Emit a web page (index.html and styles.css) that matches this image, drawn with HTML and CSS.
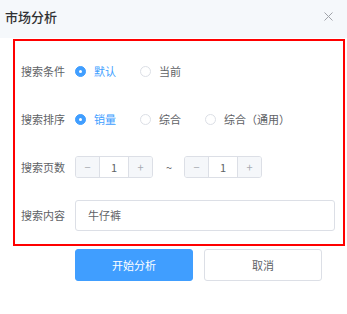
FILE: index.html
```html
<!DOCTYPE html>
<html>

<head>
  <link rel="stylesheet" href="styles.css">
</head>

<body>
  <div class="dialog">
    <div class="dialog-header">
      <span class="dialog-title">市场分析</span>
      <svg class="dialog-close" width="9" height="9" viewBox="0 0 9 9">
        <path d="M0.5 0.5 L8.5 8.5 M8.5 0.5 L0.5 8.5" stroke="#a0a3a9" stroke-width="1" fill="none"/>
      </svg>
    </div>

    <div class="form-box">
      <div class="form-row">
        <span class="form-label">搜索条件</span>
        <label class="radio checked"><span class="radio-dot"></span>默认</label>
        <label class="radio"><span class="radio-dot"></span>当前</label>
      </div>

      <div class="form-row">
        <span class="form-label">搜索排序</span>
        <label class="radio checked"><span class="radio-dot"></span>销量</label>
        <label class="radio"><span class="radio-dot"></span>综合</label>
        <label class="radio"><span class="radio-dot"></span>综合（通用）</label>
      </div>

      <div class="form-row">
        <span class="form-label">搜索页数</span>
        <div class="number-input">
          <span class="num-btn num-minus">&minus;</span>
          <span class="num-value">1</span>
          <span class="num-btn num-plus">+</span>
        </div>
        <span class="range-sep">~</span>
        <div class="number-input">
          <span class="num-btn num-minus">&minus;</span>
          <span class="num-value">1</span>
          <span class="num-btn num-plus">+</span>
        </div>
      </div>

      <div class="form-row">
        <span class="form-label">搜索内容</span>
        <div class="text-input">牛仔裤</div>
      </div>
    </div>

    <div class="dialog-footer">
      <button class="button button-primary">开始分析</button>
      <button class="button">取消</button>
    </div>
  </div>
</body>

</html>
```

FILE: styles.css
```css
body {
  margin: 0;
  background-color: #fff;
  font-family: "Noto Sans CJK SC", "Noto Sans", sans-serif;
  font-size: 11px;
  color: #606266;
}

.dialog {
  width: 347px;
  height: 314px;
}

.dialog-header {
  height: 38px;
  background-color: #f5f8fb;
  display: flex;
  justify-content: space-between;
  align-items: flex-start;
  padding: 0 14px 0 5px;
}

.dialog-title {
  font-size: 13px;
  font-weight: 500;
  line-height: 33px;
  color: #303133;
}

.dialog-close {
  margin-top: 12px;
}

/* 表单区域（红框） */
.form-box {
  margin: 1px 0 0 13px;
  width: 332px;
  box-sizing: border-box;
  border: 2px solid #ff0000;
  padding: 14px 8px 13px 6px;
}

.form-row {
  display: flex;
  align-items: center;
  height: 32px;
  margin-bottom: 16px;
}

.form-row:last-child {
  margin-bottom: 0;
}

.form-label {
  width: 54px;
  flex-shrink: 0;
  color: #606266;
}

.radio {
  display: flex;
  align-items: center;
  margin-right: 24px;
  color: #606266;
}

.radio-dot {
  width: 11px;
  height: 11px;
  box-sizing: border-box;
  border: 1px solid #dcdfe6;
  border-radius: 50%;
  background-color: #fff;
  margin-right: 8px;
  position: relative;
}

.radio.checked {
  color: #409eff;
}

.radio.checked .radio-dot {
  border-color: #409eff;
  background-color: #409eff;
}

.radio.checked .radio-dot::after {
  content: '';
  position: absolute;
  left: 3px;
  top: 3px;
  width: 3px;
  height: 3px;
  border-radius: 50%;
  background-color: #fff;
}

/* 计数器 */
.number-input {
  display: flex;
  width: 78px;
  height: 22px;
  box-sizing: border-box;
  border: 1px solid #dcdfe6;
  border-radius: 3px;
  overflow: hidden;
}

.num-btn {
  width: 23px;
  background-color: #f5f7fa;
  color: #a8abb2;
  display: flex;
  align-items: center;
  justify-content: center;
  font-size: 11px;
}

.num-minus {
  border-right: 1px solid #dcdfe6;
}

.num-plus {
  border-left: 1px solid #dcdfe6;
}

.num-value {
  flex: 1;
  display: flex;
  align-items: center;
  justify-content: center;
  color: #606266;
}

.range-sep {
  margin: 0 12px 0 13px;
}

.text-input {
  flex: 1;
  height: 31px;
  box-sizing: border-box;
  border: 1px solid #dcdfe6;
  border-radius: 3px;
  padding-left: 12px;
  display: flex;
  align-items: center;
  color: #606266;
}

.dialog-footer {
  display: flex;
  gap: 11px;
  padding: 3px 0 0 75px;
}

.button {
  width: 118px;
  height: 32px;
  border: 1px solid #dcdfe6;
  border-radius: 3px;
  background-color: #fff;
  color: #606266;
  font-family: inherit;
  font-size: 11px;
  cursor: pointer;
}

.button-primary {
  background-color: #409eff;
  border-color: #409eff;
  color: #fff;
}
```
